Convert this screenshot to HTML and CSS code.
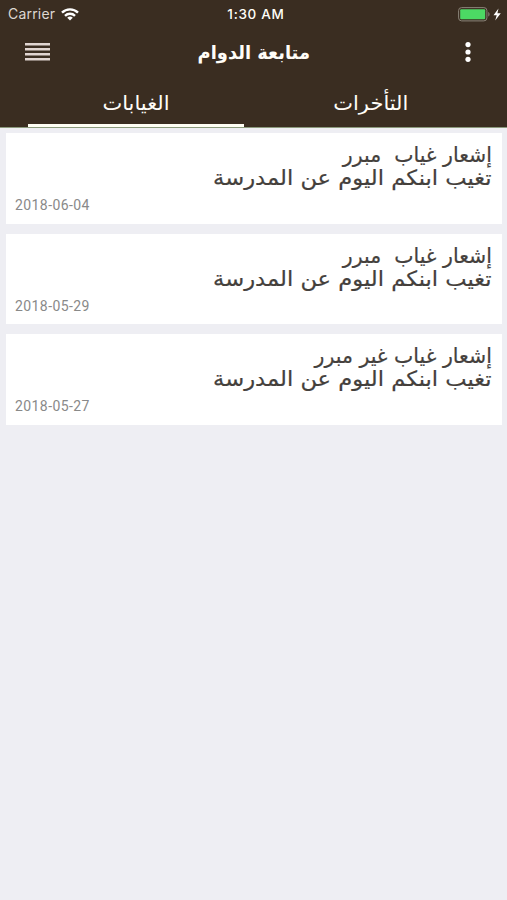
FILE: index.html
```html
<!DOCTYPE html>
<html lang="ar">
<head>
<meta charset="utf-8">
<title>متابعة الدوام</title>
<link rel="stylesheet" href="styles.css">
</head>
<body>
<header class="header">
  <div class="status">
    <div class="carrier"><span>Carrier</span>
      <svg class="wifi" width="18" height="13" viewBox="0 0 18 13" fill="none" stroke="#fff" stroke-width="2.4"><path d="M1 4.7a11.4 11.4 0 0 1 16 0M4 7.8a7.1 7.1 0 0 1 10 0"/><path d="M9 12.6L6.2 9.8a4 4 0 0 1 5.6 0z" fill="#fff" stroke="none"/></svg>
    </div>
    <div class="time">1:30 AM</div>
    <div class="power">
      <svg width="44" height="15" viewBox="0 0 44 15"><rect x=".6" y=".6" width="28.3" height="13.3" rx="3" fill="none" stroke="#8b8479" stroke-width="1"/><rect x="2.2" y="2.2" width="25" height="10" rx="1" fill="#4cd964"/><path d="M30.3 5v4.6c1.7-.7 1.7-3.9 0-4.6z" fill="#8b8479"/><path d="M40.5 1.6l-5 6.6h3.2l-1.5 5.2 5.6-7.1h-3.4z" fill="#fff"/></svg>
    </div>
  </div>
  <div class="navbar">
    <svg class="menu" width="25" height="18" viewBox="0 0 25 18" fill="#e0d5d1"><path d="M0 0h25v2.5H0zM0 5h25v2.5H0zM0 10h25v2.5H0zM0 15h25v2.5H0z"/></svg>
    <h1 class="title" dir="rtl"><span>متابعة الدوام</span></h1>
    <svg class="more" width="6" height="20" viewBox="0 0 6 20" fill="#fff"><circle cx="3" cy="2.6" r="2.6"/><circle cx="3" cy="10" r="2.6"/><circle cx="3" cy="17.3" r="2.6"/></svg>
  </div>
  <nav class="tabs">
    <div class="tab active" dir="rtl"><span>الغيابات</span></div>
    <div class="tab" dir="rtl"><span>التأخرات</span></div>
  </nav>
</header>
<main class="list">
  <article class="card"><p class="line" dir="rtl"><span class="head">إشعار غياب&nbsp; مبرر</span></p><p class="line" dir="rtl"><span class="body">تغيب ابنكم اليوم عن المدرسة</span></p><time>2018-06-04</time></article>
  <article class="card"><p class="line" dir="rtl"><span class="head">إشعار غياب&nbsp; مبرر</span></p><p class="line" dir="rtl"><span class="body">تغيب ابنكم اليوم عن المدرسة</span></p><time>2018-05-29</time></article>
  <article class="card"><p class="line" dir="rtl"><span class="head">إشعار غياب غير مبرر</span></p><p class="line" dir="rtl"><span class="body">تغيب ابنكم اليوم عن المدرسة</span></p><time>2018-05-27</time></article>
</main>
</body>
</html>
```
FILE: styles.css
```css
* { box-sizing: border-box; margin: 0; padding: 0; }
body { width: 507px; height: 900px; overflow: hidden; background: #eeeef3; font-family: "DejaVu Sans", sans-serif; }
.header { height: 128px; background: #3a2d21; color: #fffdf8; border-bottom: 1px solid #8b9a7c; }
.status { display: grid; grid-template-columns: 1fr auto 1fr; align-items: center; height: 28px; padding: 0 5px 0 8px; font: 14px/28px Inter, sans-serif; }
.carrier { display: flex; align-items: center; gap: 6px; color: #ddd8d2; letter-spacing: .2px; }
.time { padding-left: 2px; font-weight: 500; font-size: 13.5px; letter-spacing: .7px; }
.power { display: flex; justify-content: flex-end; }
.navbar { display: grid; grid-template-columns: 25px 1fr 6px; align-items: center; height: 48px; padding: 0 36px 0 25px; }
.title { padding-right: 7px; text-align: center; font-size: 19px; font-weight: 700; line-height: 48px; white-space: nowrap; }
.title span { display: inline-block; transform: scaleX(.94); }
.tabs { display: flex; height: 51px; padding: 0 28px; gap: 19px; }
.tab { flex: 0 0 216px; height: 51px; text-align: center; font-size: 20px; line-height: 55px; border-bottom: 3px solid transparent; }
.tab span { display: inline-block; transform: scaleX(1.05); }
.active { border-bottom-color: #fffff5; }
.list { display: flex; flex-direction: column; gap: 10px; padding: 5px 5px 0 6px; }
.card { height: 90.5px; padding: 11px 10px 0 9px; background: #fff; color: #44403c; }
.line { height: 23px; font-size: 21px; line-height: 23px; white-space: nowrap; }
.line span { display: inline-block; transform-origin: right center; -webkit-text-stroke: .2px currentColor; }
.head { transform: scaleX(.975); }
.body { transform: scaleX(1.077); }
.card time { display: block; margin-top: 5px; font: 14px/20px Roboto, sans-serif; letter-spacing: .42px; color: #898989; }
```
